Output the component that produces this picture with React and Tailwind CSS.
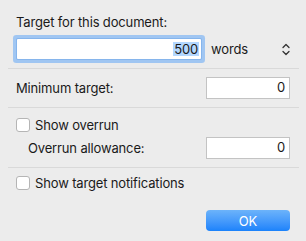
export default function App() {
  const font = { fontFamily: 'Inter, "Liberation Sans", sans-serif' };
  return (
    <div
      className="w-[306px] h-[241px] bg-[#ececec] px-[8px] text-[13px] tracking-[-0.15px] text-[#1a1a1a] overflow-hidden"
      style={font}
    >
      <div className="pt-[14px] pl-[8px] leading-[16px]">Target for this document:</div>
      <div className="mt-[9px] flex items-center h-[20px] pl-[9px]">
        <div className="w-[184px] h-[20px] bg-white rounded-[1px] shadow-[0_0_0_1px_#86b5ec,0_0_0_4px_#a0c6f2] flex items-center justify-end pr-[2px]">
          <span className="bg-[#b3d7ff] h-[14px] leading-[14px] px-[1px]">500</span>
        </div>
        <span className="ml-[10px] w-[71px] leading-[16px]">words</span>
        <svg width="8" height="13" viewBox="0 0 8 13" fill="none" stroke="#333" strokeWidth="1.3" strokeLinecap="round" strokeLinejoin="round">
          <path d="M1 4.5 L4 1.5 L7 4.5" />
          <path d="M1 8.5 L4 11.5 L7 8.5" />
        </svg>
      </div>
      <div className="mt-[9px] h-px w-[291px] bg-[#d9d9d9]" />
      <div className="mt-[8px] flex items-center justify-between h-[22px] pl-[8px] pr-[8px]">
        <span className="leading-[16px]">Minimum target:</span>
        <div className="w-[84px] h-[22px] bg-white border border-[#c3c3c3] flex items-center justify-end pr-[4px]">0</div>
      </div>
      <div className="mt-[8px] h-px w-[291px] bg-[#d9d9d9]" />
      <div className="mt-[10px] flex items-center h-[14px] pl-[8px]">
        <div className="w-[14px] h-[14px] rounded-[3px] bg-white border border-[#b5b5b5]" />
        <span className="ml-[5px] leading-[16px]">Show overrun</span>
      </div>
      <div className="mt-[5px] flex items-center justify-between h-[22px] pl-[20px] pr-[8px]">
        <span className="leading-[16px]">Overrun allowance:</span>
        <div className="w-[84px] h-[22px] bg-white border border-[#c3c3c3] flex items-center justify-end pr-[4px]">0</div>
      </div>
      <div className="mt-[8px] h-px w-[291px] bg-[#d9d9d9]" />
      <div className="mt-[8px] flex items-center h-[14px] pl-[8px]">
        <div className="w-[14px] h-[14px] rounded-[3px] bg-white border border-[#b5b5b5]" />
        <span className="ml-[5px] leading-[16px]">Show target notifications</span>
      </div>
      <div className="mt-[20px] flex justify-end pr-[8px]">
        <div className="w-[84px] h-[21px] rounded-[4px] bg-gradient-to-b from-[#6cb3fa] to-[#1a82fb] text-white flex items-center justify-center leading-[16px]">
          OK
        </div>
      </div>
    </div>
  );
}
